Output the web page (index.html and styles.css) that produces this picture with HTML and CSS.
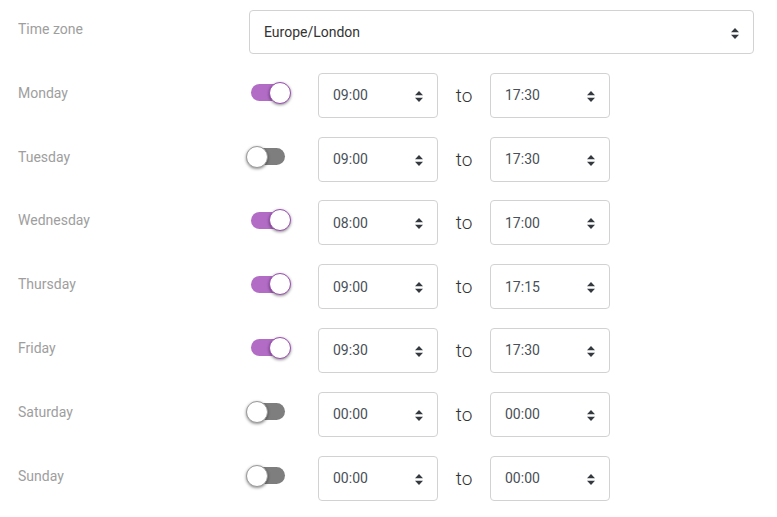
FILE: index.html
```html
<!DOCTYPE html>
<html lang="en">
<head>
<meta charset="utf-8">
<title>Opening hours</title>
<link rel="stylesheet" href="styles.css">
</head>
<body>
<div class="schedule">
  <div class="row tz-row">
    <div class="label">Time zone</div>
    <div class="select tz"><span>Europe/London</span><svg class="caret" viewBox="0 0 8 11" width="8" height="11"><path d="M4 0L8 4.3H0Z M4 11L0 6.7H8Z"/></svg></div>
  </div>

  <div class="row">
    <div class="label">Monday</div>
    <div class="switch-cell"><div class="switch on"><span class="track"></span><span class="knob"></span></div></div>
    <div class="select"><span>09:00</span><svg class="caret" viewBox="0 0 8 11" width="8" height="11"><path d="M4 0L8 4.3H0Z M4 11L0 6.7H8Z"/></svg></div>
    <div class="to">to</div>
    <div class="select"><span>17:30</span><svg class="caret" viewBox="0 0 8 11" width="8" height="11"><path d="M4 0L8 4.3H0Z M4 11L0 6.7H8Z"/></svg></div>
  </div>

  <div class="row">
    <div class="label">Tuesday</div>
    <div class="switch-cell"><div class="switch"><span class="track"></span><span class="knob"></span></div></div>
    <div class="select"><span>09:00</span><svg class="caret" viewBox="0 0 8 11" width="8" height="11"><path d="M4 0L8 4.3H0Z M4 11L0 6.7H8Z"/></svg></div>
    <div class="to">to</div>
    <div class="select"><span>17:30</span><svg class="caret" viewBox="0 0 8 11" width="8" height="11"><path d="M4 0L8 4.3H0Z M4 11L0 6.7H8Z"/></svg></div>
  </div>

  <div class="row">
    <div class="label">Wednesday</div>
    <div class="switch-cell"><div class="switch on"><span class="track"></span><span class="knob"></span></div></div>
    <div class="select"><span>08:00</span><svg class="caret" viewBox="0 0 8 11" width="8" height="11"><path d="M4 0L8 4.3H0Z M4 11L0 6.7H8Z"/></svg></div>
    <div class="to">to</div>
    <div class="select"><span>17:00</span><svg class="caret" viewBox="0 0 8 11" width="8" height="11"><path d="M4 0L8 4.3H0Z M4 11L0 6.7H8Z"/></svg></div>
  </div>

  <div class="row">
    <div class="label">Thursday</div>
    <div class="switch-cell"><div class="switch on"><span class="track"></span><span class="knob"></span></div></div>
    <div class="select"><span>09:00</span><svg class="caret" viewBox="0 0 8 11" width="8" height="11"><path d="M4 0L8 4.3H0Z M4 11L0 6.7H8Z"/></svg></div>
    <div class="to">to</div>
    <div class="select"><span>17:15</span><svg class="caret" viewBox="0 0 8 11" width="8" height="11"><path d="M4 0L8 4.3H0Z M4 11L0 6.7H8Z"/></svg></div>
  </div>

  <div class="row">
    <div class="label">Friday</div>
    <div class="switch-cell"><div class="switch on"><span class="track"></span><span class="knob"></span></div></div>
    <div class="select"><span>09:30</span><svg class="caret" viewBox="0 0 8 11" width="8" height="11"><path d="M4 0L8 4.3H0Z M4 11L0 6.7H8Z"/></svg></div>
    <div class="to">to</div>
    <div class="select"><span>17:30</span><svg class="caret" viewBox="0 0 8 11" width="8" height="11"><path d="M4 0L8 4.3H0Z M4 11L0 6.7H8Z"/></svg></div>
  </div>

  <div class="row">
    <div class="label">Saturday</div>
    <div class="switch-cell"><div class="switch"><span class="track"></span><span class="knob"></span></div></div>
    <div class="select"><span>00:00</span><svg class="caret" viewBox="0 0 8 11" width="8" height="11"><path d="M4 0L8 4.3H0Z M4 11L0 6.7H8Z"/></svg></div>
    <div class="to">to</div>
    <div class="select"><span>00:00</span><svg class="caret" viewBox="0 0 8 11" width="8" height="11"><path d="M4 0L8 4.3H0Z M4 11L0 6.7H8Z"/></svg></div>
  </div>

  <div class="row">
    <div class="label">Sunday</div>
    <div class="switch-cell"><div class="switch"><span class="track"></span><span class="knob"></span></div></div>
    <div class="select"><span>00:00</span><svg class="caret" viewBox="0 0 8 11" width="8" height="11"><path d="M4 0L8 4.3H0Z M4 11L0 6.7H8Z"/></svg></div>
    <div class="to">to</div>
    <div class="select"><span>00:00</span><svg class="caret" viewBox="0 0 8 11" width="8" height="11"><path d="M4 0L8 4.3H0Z M4 11L0 6.7H8Z"/></svg></div>
  </div>
</div>
</body>
</html>
```

FILE: styles.css
```css
html, body {
  margin: 0;
  padding: 0;
  background: #ffffff;
}

body {
  font-family: Roboto, "Liberation Sans", Arial, sans-serif;
  color: #333333;
}

.schedule {
  padding: 10px 0 0 18px;
  display: flex;
  flex-direction: column;
  gap: 18.8px;
}

.row {
  display: flex;
  align-items: flex-start;
  height: 45px;
}

.tz-row {
  height: 44px;
}

.label {
  width: 231px;
  flex: none;
  font-size: 14px;
  line-height: 20px;
  padding-top: 10px;
  color: #9e9e9e;
}

.tz-row .label {
  padding-top: 9px;
}

.select {
  box-sizing: border-box;
  width: 120px;
  height: 45px;
  flex: none;
  border: 1px solid #d2d2d2;
  border-radius: 4px;
  background: #ffffff;
  display: flex;
  align-items: center;
  justify-content: space-between;
  padding: 0 14px 0 14px;
  font-size: 14px;
  color: #495057;
}

.select.tz {
  width: 505px;
  height: 44px;
  color: #333333;
}

.caret {
  fill: #343a40;
  display: block;
  margin-top: 2px;
}

.switch-cell {
  width: 69px;
  flex: none;
  padding-top: 9px;
}

.switch {
  position: relative;
  width: 45px;
  height: 22px;
  margin-left: -3px;
}

.track {
  position: absolute;
  left: 5px;
  top: 2.5px;
  width: 34px;
  height: 17px;
  border-radius: 9px;
  background: #7e7e7e;
}

.knob {
  position: absolute;
  left: 0;
  top: 0;
  box-sizing: border-box;
  width: 22px;
  height: 22px;
  border-radius: 50%;
  background: #ffffff;
  border: 1px solid #9a9a9a;
  box-shadow: 0 1px 3px rgba(0, 0, 0, 0.45);
}

.switch.on .track {
  background: #b26cc6;
}

.switch.on .knob {
  left: 23px;
  border: 1.5px solid #9b4db4;
}

.to {
  width: 52px;
  flex: none;
  text-align: center;
  font-size: 19px;
  font-weight: 300;
  line-height: 45px;
  color: #333333;
}
```
